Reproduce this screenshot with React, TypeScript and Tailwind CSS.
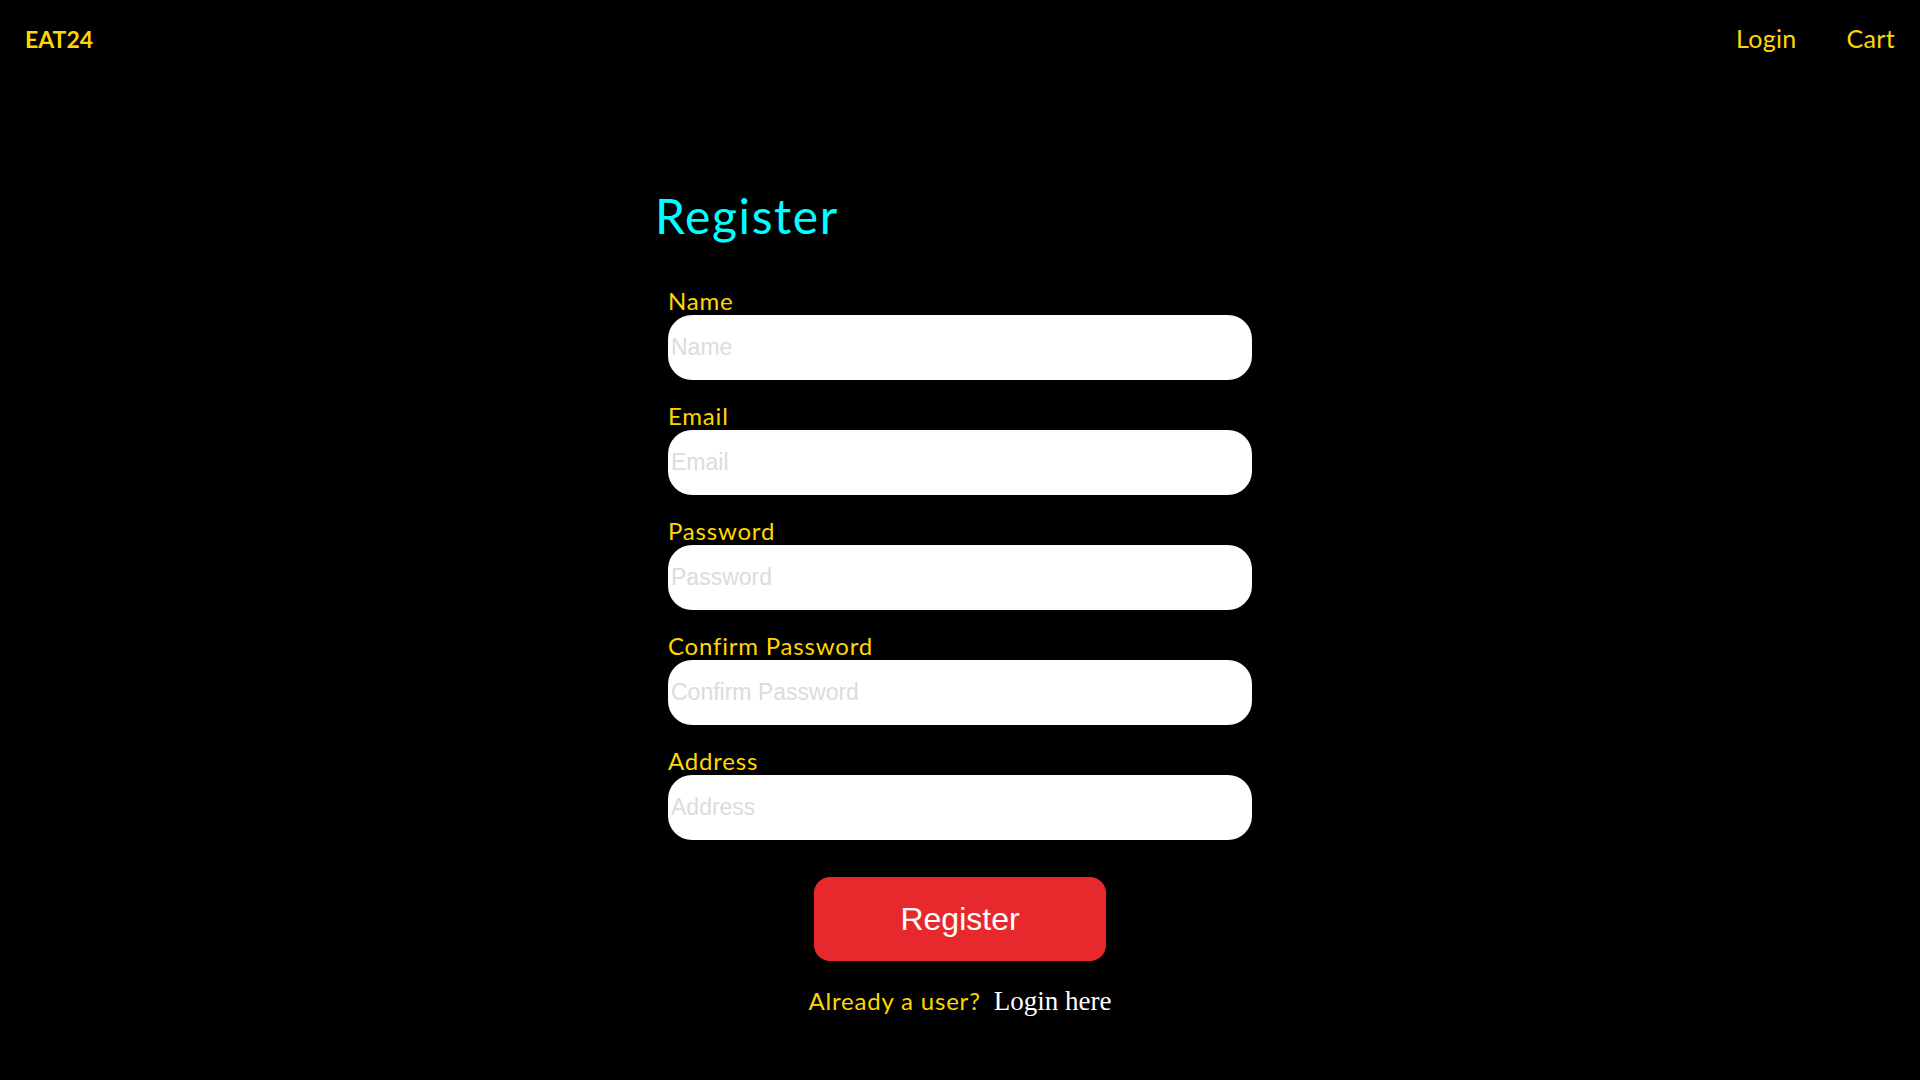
import { useState } from "react";

const fields = [
  { label: "Name", type: "text" },
  { label: "Email", type: "email" },
  { label: "Password", type: "password" },
  { label: "Confirm Password", type: "password" },
  { label: "Address", type: "text" },
];

const quick = { fontFamily: "Lato, 'Open Sans', sans-serif" };

export default function App() {
  const [values, setValues] = useState<Record<string, string>>({});

  return (
    <div className="min-h-screen bg-black" style={quick}>
      {/* Navbar */}
      <nav className="flex h-[78px] items-center justify-between pl-[25px] pr-[25px]">
        <a href="#" className="text-[23px] font-bold text-[#ffd700]">
          EAT24
        </a>
        <div className="flex items-center gap-[50px] text-[25px] tracking-[0.3px] text-[#ffd700]">
          <a href="#">Login</a>
          <a href="#">Cart</a>
        </div>
      </nav>

      {/* Form */}
      <div className="mx-auto w-[610px] pt-[114px]">
        <h1 className="text-[48px] leading-none tracking-[1.6px] text-[#00ffff]">Register</h1>

        <form className="mt-[47px] flex flex-col gap-[22px] px-[13px]" onSubmit={(e) => e.preventDefault()}>
          {fields.map((f) => (
            <div key={f.label} className="flex flex-col">
              <label className="text-[24px] leading-[28px] tracking-[0.8px] text-[#ffd700]">{f.label}</label>
              <input
                type={f.type}
                placeholder={f.label}
                value={values[f.label] ?? ""}
                onChange={(e) => setValues((v) => ({ ...v, [f.label]: e.target.value }))}
                className="h-[65px] w-full rounded-[24px] bg-white px-[3px] text-[23px] text-black outline-none placeholder:text-[#dcdcdc]"
                style={{ fontFamily: "'Liberation Sans', Arial, sans-serif" }}
              />
            </div>
          ))}

          <div className="mt-[15px] flex justify-center">
            <button
              type="submit"
              className="h-[84px] w-[292px] rounded-[16px] bg-[#e7292d] text-[32px] text-white"
              style={{ fontFamily: "'Liberation Sans', Arial, sans-serif" }}
            >
              Register
            </button>
          </div>

          <p className="mt-[-2px] flex items-baseline justify-center gap-[13px] text-[24px] tracking-[0.8px] text-[#ffd700]">
            <span>Already a user?</span>
            <a
              href="#"
              className="text-[27px] tracking-normal text-white"
              style={{ fontFamily: "'Liberation Serif', 'Times New Roman', serif" }}
            >
              Login here
            </a>
          </p>
        </form>
      </div>
    </div>
  );
}
